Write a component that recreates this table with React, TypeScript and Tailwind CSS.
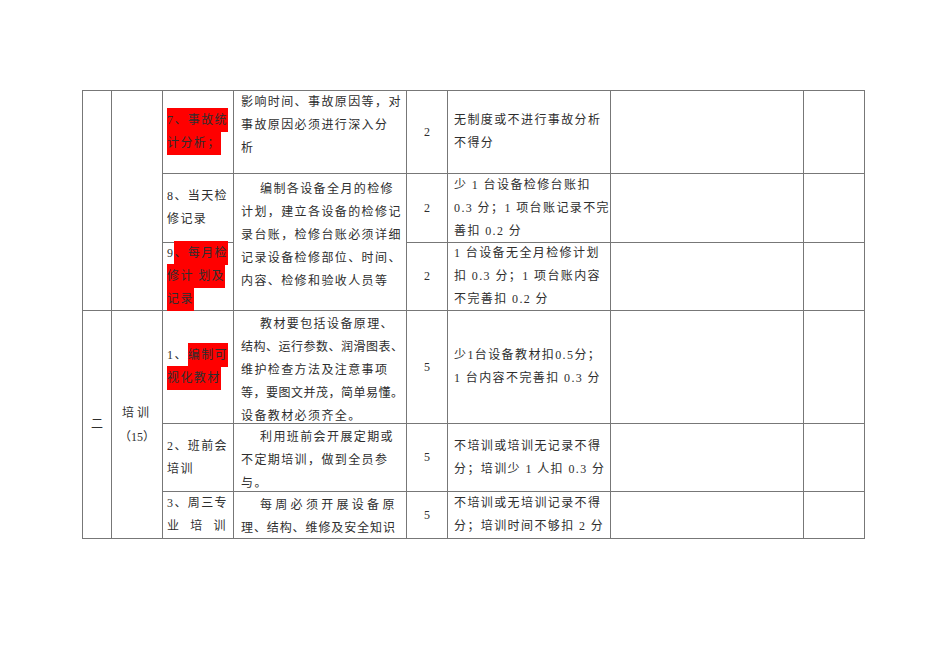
const Hl = ({ children }: { children: React.ReactNode }) => (
  <span className="bg-[#ff0000] py-[4.8px]">{children}</span>
);

const cell =
  "bg-white text-[12px] leading-[23px] tracking-[1.4px] text-[#2e2e2e] whitespace-nowrap font-['Liberation_Serif','Noto_Sans_CJK_SC',serif]";

const ItemCell = ({ children, top }: { children: React.ReactNode; top?: boolean }) => (
  <div className={`${cell} flex ${top ? "items-start" : "items-center"} pl-[4px] leading-[22.5px]`}>
    <div>{children}</div>
  </div>
);

const DescCell = ({ children, className = "" }: { children: React.ReactNode; className?: string }) => (
  <div className={`${cell} pl-[7px] ${className}`}>{children}</div>
);

const Score = ({ value }: { value: string }) => (
  <div className={`${cell} flex items-center justify-center tracking-normal`}>{value}</div>
);

const RuleCell = ({ lines }: { lines: string[] }) => (
  <div className={`${cell} flex items-center pl-[6px]`}>
    <div>
      {lines.map((l, i) => (
        <div key={i}>{l}</div>
      ))}
    </div>
  </div>
);

const Blank = () => <div className="bg-white" />;

export default function App() {
  return (
    <div className="min-h-[672px] w-[950px] bg-white pl-[82px] pt-[90px]">
      <div className="grid w-fit grid-cols-[28px_50px_70px_172px_40px_162px_192px_60px] grid-rows-[82px_68px_67px_112px_67px_46px] gap-px bg-[#777777] p-px">
        {/* section one (continued) */}
        <div className="row-span-3 bg-white" />
        <div className="row-span-3 bg-white" />

        {/* row 7 */}
        <ItemCell>
          <Hl>
            7、事故统
            <br />
            计分析；
          </Hl>
        </ItemCell>
        <DescCell className="pt-0">
          <div>影响时间、事故原因等，对</div>
          <div>事故原因必须进行深入分</div>
          <div>析</div>
        </DescCell>
        <Score value="2" />
        <RuleCell lines={["无制度或不进行事故分析", "不得分"]} />
        <Blank />
        <Blank />

        {/* row 8 */}
        <ItemCell>
          8、当天检
          <br />
          修记录
        </ItemCell>
        <DescCell className="row-span-2 pt-[4px]">
          <div className="indent-[19px]">编制各设备全月的检修</div>
          <div>计划，建立各设备的检修记</div>
          <div>录台账，检修台账必须详细</div>
          <div>记录设备检修部位、时间、</div>
          <div>内容、检修和验收人员等</div>
        </DescCell>
        <Score value="2" />
        <RuleCell lines={["少 1 台设备检修台账扣", "0.3 分；1 项台账记录不完", "善扣 0.2 分"]} />
        <Blank />
        <Blank />

        {/* row 9 */}
        <ItemCell top>
          <div className="-mt-px">
            9<Hl>、每月检</Hl>
            <br />
            <Hl>
              修计 划及
              <br />
              记录
            </Hl>
          </div>
        </ItemCell>
        <Score value="2" />
        <RuleCell lines={["1 台设备无全月检修计划", "扣 0.3 分；1 项台账内容", "不完善扣 0.2 分"]} />
        <Blank />
        <Blank />

        {/* section two: training */}
        <div className={`${cell} row-span-3 flex items-center justify-center tracking-normal`}>二</div>
        <div className={`${cell} row-span-3 flex flex-col items-center justify-center leading-[24px] tracking-normal`}>
          <div className="tracking-[3px]">培训</div>
          <div>（15）</div>
        </div>

        {/* row 1 */}
        <ItemCell>
          1、
          <Hl>
            编制可
            <br />
            视化教材
          </Hl>
        </ItemCell>
        <DescCell className="pt-[2px] leading-[22.5px]">
          <div className="indent-[19px]">教材要包括设备原理、</div>
          <div className="tracking-[0.5px]">结构、运行参数、润滑图表、</div>
          <div>维护检查方法及注意事项</div>
          <div className="tracking-[0.5px]">等，要图文并茂，简单易懂。</div>
          <div>设备教材必须齐全。</div>
        </DescCell>
        <Score value="5" />
        <RuleCell lines={["少1台设备教材扣0.5分；", "1 台内容不完善扣 0.3 分"]} />
        <Blank />
        <Blank />

        {/* row 2 */}
        <ItemCell>
          2、班前会
          <br />
          培训
        </ItemCell>
        <DescCell className="pt-[2px]">
          <div className="indent-[19px]">利用班前会开展定期或</div>
          <div>不定期培训，做到全员参</div>
          <div>与。</div>
        </DescCell>
        <Score value="5" />
        <RuleCell lines={["不培训或培训无记录不得", "分；培训少 1 人扣 0.3 分"]} />
        <Blank />
        <Blank />

        {/* row 3 */}
        <ItemCell>
          <div>3、周三专</div>
          <div className="flex w-[60px] justify-between">
            <span>业</span>
            <span>培</span>
            <span>训</span>
          </div>
        </ItemCell>
        <DescCell className="pt-[2px]">
          <div className="indent-[19px] tracking-[3.3px]">每周必须开展设备原</div>
          <div className="tracking-[0.9px]">理、结构、维修及安全知识</div>
        </DescCell>
        <Score value="5" />
        <RuleCell lines={["不培训或无培训记录不得", "分；培训时间不够扣 2 分"]} />
        <Blank />
        <Blank />
      </div>
    </div>
  );
}
